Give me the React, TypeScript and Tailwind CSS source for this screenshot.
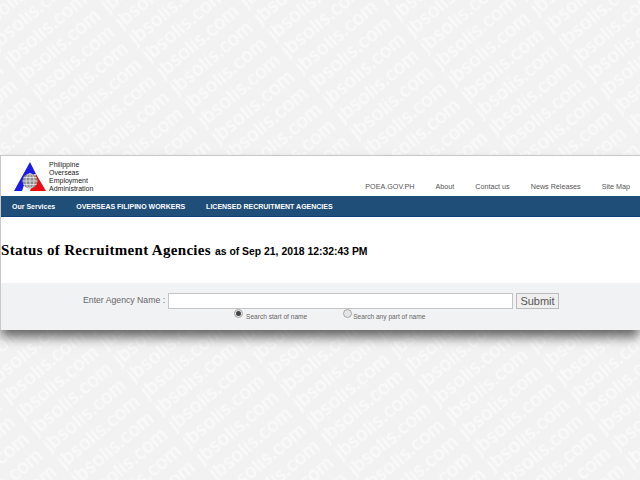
const navLinks = ["POEA.GOV.PH", "About", "Contact us", "News Releases", "Site Map"];

function Watermark() {
  return (
    <svg className="absolute inset-0 w-[640px] h-[480px]" viewBox="0 0 640 480">
      <defs>
        <pattern id="wm" width="109" height="21.4" patternUnits="userSpaceOnUse" patternTransform="translate(2 56) rotate(-40)">
          <text x="0" y="14" fontFamily="Lato, sans-serif" fontSize="20" letterSpacing="0.5" stroke="#f9f9f9" strokeWidth="0.5" fill="#f9f9f9">jbsolis.com</text>
        </pattern>
      </defs>
      <rect width="640" height="480" fill="url(#wm)" />
    </svg>
  );
}

function Logo() {
  return (
    <svg width="33" height="30" viewBox="0 0 33 30" className="shrink-0">
      <path d="M16 0 L22 12 L13 14 L8 29 L0 29 Z" fill="#1c1ce6" />
      <path d="M22 12 L32 29 L16 29 Z" fill="#e60f14" />
      <circle cx="16" cy="19" r="7.5" fill="#8d8d8d" />
      <g stroke="#e8e8e8" strokeWidth="0.8" fill="none">
        <ellipse cx="16" cy="19" rx="4" ry="7.5" />
        <path d="M16 11.5v15M8.5 19h15M9.5 15.5h13M9.5 22.5h13" />
      </g>
    </svg>
  );
}

function Radio({ checked, label, gap }: { checked?: boolean; label: string; gap: string }) {
  return (
    <div className={`flex items-center ${gap}`}>
      <span className="w-[9px] h-[9px] rounded-full border border-[#a8a8a8] bg-[#e4e4e4] flex items-center justify-center -mt-[6px]">
        {checked && <span className="w-[5px] h-[5px] rounded-full bg-[#444]" />}
      </span>
      <span className="text-[6.6px] leading-[9px] text-[#666] whitespace-nowrap">{label}</span>
    </div>
  );
}

export default function App() {
  return (
    <div className="relative w-[640px] h-[480px] overflow-hidden bg-[#f2f2f2] font-['Liberation_Sans',sans-serif]">
      <Watermark />
      <div className="relative pt-[155px]">
        <div className="bg-white shadow-[0_8px_11px_-1px_rgba(0,0,0,0.6)] border-t border-l border-[#c8c8c8]">
          <div className="h-[40px] flex justify-between">
            <div className="flex items-center gap-[2px] pl-[13px] pt-[2px]">
              <Logo />
              <div className="text-[7px] leading-[8px] text-[#222]">
                <div>Philippine</div>
                <div>Overseas</div>
                <div>Employment</div>
                <div>Administration</div>
              </div>
            </div>
            <div className="flex items-end gap-[21px] pr-[10px] pb-[5px] text-[7.2px] leading-[9px] text-[#555]">
              {navLinks.map((link) => (
                <span key={link}>{link}</span>
              ))}
            </div>
          </div>
          <div className="h-[21px] bg-[#1f4e79] border-b border-[#0f3f7a] flex items-center gap-[21px] pl-[11px] pt-[3px] text-[7px] font-bold text-white">
            <span>Our Services</span>
            <span>OVERSEAS FILIPINO WORKERS</span>
            <span>LICENSED RECRUITMENT AGENCIES</span>
          </div>
          <div className="h-[66px] flex items-baseline pt-[22px] font-bold text-black">
            <span className="font-['Liberation_Serif',serif] text-[15px] tracking-[0.32px] mr-[4px]">Status of Recruitment Agencies</span>
            <span className="text-[10.4px]">as of Sep 21, 2018 12:32:43 PM</span>
          </div>
          <div className="h-[47px] bg-[#f1f2f4] pt-[10px] flex flex-col">
            <div className="flex items-center text-[#666] pl-[82px]">
              <span className="text-[8.7px] w-[85px] whitespace-nowrap">Enter Agency Name&nbsp;:</span>
              <div className="w-[345px] h-[16px] bg-white border border-[#c4c4c4]" />
              <button className="ml-[3px] w-[43px] h-[16px] border border-[#bbb] bg-[#efefef] text-[11px] leading-none text-[#555]">Submit</button>
            </div>
            <div className="flex pl-[233px] gap-[36px] mt-[3px]">
              <Radio checked gap="gap-[3px]" label="Search start of name" />
              <Radio gap="gap-[1px]" label="Search any part of name" />
            </div>
          </div>
        </div>
      </div>
    </div>
  );
}
